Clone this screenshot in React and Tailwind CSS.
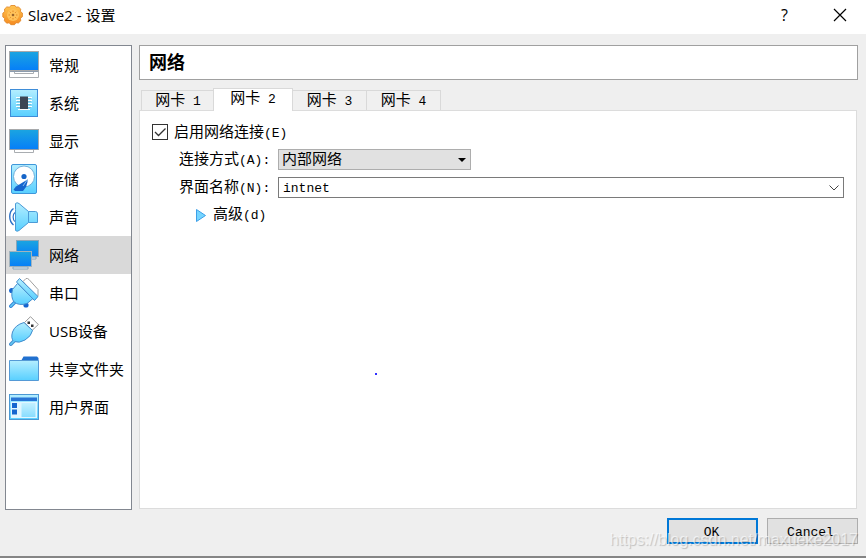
import React, { useState } from "react";

const SONG = "font-['Liberation_Mono','Noto_Sans_CJK_SC',monospace]";
const UI = "font-['Open_Sans','Noto_Sans_CJK_SC',sans-serif]";

function Gradients() {
  return (
    <svg width="0" height="0" className="absolute" aria-hidden="true">
      <defs>
        <linearGradient id="screen" x1="0" y1="0" x2="0" y2="1">
          <stop offset="0" stopColor="#1ba5e0" />
          <stop offset="1" stopColor="#067ef8" />
        </linearGradient>
        <linearGradient id="sky" x1="0" y1="0" x2="0" y2="1">
          <stop offset="0" stopColor="#b4eeff" />
          <stop offset="1" stopColor="#58cfff" />
        </linearGradient>
        <linearGradient id="gear" x1="0" y1="0" x2="0" y2="1">
          <stop offset="0" stopColor="#ffc552" />
          <stop offset="1" stopColor="#f48b22" />
        </linearGradient>
      </defs>
    </svg>
  );
}

function Icon({ children }) {
  return (
    <svg viewBox="0 0 30 30" className="size-[30px] shrink-0" aria-hidden="true">
      {children}
    </svg>
  );
}

const GeneralIcon = () => (
  <Icon>
    <path d="M.5 20.5h29v7H.5z" fill="#fff" stroke="#a9adb1" />
    <rect x="0.5" y="1.5" width="29" height="19" fill="url(#screen)" stroke="#a7a9ab" />
    <path d="M5.5 21v2.5h19V21" fill="#fff" stroke="#a9adb1" />
    <path d="M1 21.5h28" stroke="#8c9cae" />
  </Icon>
);

const SystemIcon = () => (
  <Icon>
    <rect x="1.5" y="1.5" width="27" height="27" fill="url(#sky)" stroke="#3f8dd8" />
    <path d="M7 9.500h16M7 12.500h16M7 15.500h16M7 18.500h16M9 21.500h12" stroke="#fff" />
    <path d="M8 10.500h14M8 13.500h14M8 16.500h14M8 19.500h14" stroke="#6fb4d0" strokeWidth=".8" />
    <rect x="11" y="8.500" width="8" height="12.500" fill="#3c4654" />
  </Icon>
);

const DisplayIcon = () => (
  <Icon>
    <path d="M5.5 23v3.5h19V23" fill="#fff" stroke="#a9adb1" />
    <rect x="0.5" y="3.5" width="29" height="20" fill="url(#screen)" stroke="#a7a9ab" />
    <path d="M1 23.5h28" stroke="#8c9cae" />
  </Icon>
);

const StorageIcon = () => (
  <Icon>
    <rect x="2.5" y=".5" width="25" height="29" rx="1.5" fill="url(#sky)" stroke="#3f97da" />
    <circle cx="15" cy="12.5" r="10.5" fill="#fff" stroke="#5fa0cf" strokeWidth=".8" />
    <circle cx="15" cy="12.5" r="2.6" fill="#1565c8" />
    <path d="M18.5 15.5 7 22.5 4.5 25.5 6 27h8l3-4 1.5-5z" fill="#1565cf" />
    <path d="M18.5 15.5 14 22" stroke="#8bbdf0" />
  </Icon>
);

const SoundIcon = () => (
  <Icon>
    <path d="M4.500 6.500C-.500 10 -.500 19 4.500 23" fill="none" stroke="#2c71c6" strokeWidth="1.400" />
    <path d="M6 10.500C3.500 12 3.500 18 6 19.500" fill="none" stroke="#2c71c6" strokeWidth="1.200" />
    <path d="M6.500 7.500V1.500Q8 0 10 1.500L19.500 9.500H26.500Q28.500 9.500 28.500 12V20.500H19.500L10 28.500Q8 30 6.500 28.500Z" fill="url(#sky)" stroke="#4c9bd6" />
    <path d="M19.500 9.500v11" stroke="#4c9bd6" />
  </Icon>
);

const NetworkIcon = () => (
  <Icon>
    <path d="M22 17h5v2h-5z" fill="#e6eef5" stroke="#8aa5b9" />
    <rect x="7.500" y=".500" width="22" height="16" fill="url(#screen)" stroke="#8aa5b9" />
    <rect x=".500" y="11.500" width="22" height="15" fill="url(#screen)" stroke="#a2b3be" />
    <path d="M4 27h15v2H4z" fill="#e6eef5" stroke="#8aa5b9" />
  </Icon>
);

const SerialIcon = () => (
  <Icon>
    <path d="M14 3.500 17 .500Q18.500 0 20 1.500L29 11.500V17.500L27.500 19.500z" fill="#fff" stroke="#a0a0a0" />
    <path d="M1.800 28.200 6.500 23.500" stroke="#3285d8" strokeWidth="3.500" strokeLinecap="round" />
    <path d="M1.800 28.200 6 24" stroke="#64caf5" strokeWidth="1.500" strokeLinecap="round" />
    <circle cx="2.700" cy="12.500" r="2.600" fill="#1565cf" />
    <circle cx="17" cy="27" r="2.600" fill="#1565cf" />
    <path d="M8.500 5.500 24 20.500 18 25.500Q10 28 5 24 1.500 19 3.500 11.500z" fill="url(#sky)" stroke="#438dce" />
    <path d="M7.500 4 10.500.500 29 18.500 25.500 22.500z" fill="url(#sky)" stroke="#438dce" />
  </Icon>
);

const UsbIcon = () => (
  <Icon>
    <path d="M15.500 6.500 21.500.700 29.300 8.500 23 14.500z" fill="#fff" stroke="#999" />
    <path d="M18.500 5.500h2.500v2.500h-2.500zM22 8.500h2.500v2.500h-2.500z" fill="#333" />
    <path d="M1.800 28.200 6 24" stroke="#438dce" strokeWidth="3.500" strokeLinecap="round" />
    <path d="M15 6.500 23.500 14.500Q22.500 20 16 24 10 27.500 5 25.500 1.500 22.500 3.500 16 6 9 15 6.500Z" fill="url(#sky)" stroke="#438dce" />
    <path d="M1.800 28.200 6 24" stroke="#64caf5" strokeWidth="1.500" strokeLinecap="round" />
  </Icon>
);

const FolderIcon = () => (
  <Icon>
    <path d="M12 7 14.500 2.500H28l1.500 1.500V9H12z" fill="#2170cf" />
    <path d="M.500 6.500h29v20H.500z" fill="url(#sky)" stroke="#559ad6" />
  </Icon>
);

const InterfaceIcon = () => (
  <Icon>
    <rect x=".500" y="2.500" width="29" height="25" fill="url(#sky)" stroke="#4b98d3" />
    <path d="M2 5.500h26v3.500H2z" fill="#2875d5" />
    <path d="M2 10h26v16H2z" fill="#e0f6ff" />
    <path d="M3 11h5v5H3zM3 17.500h5v5H3z" fill="#1566cf" />
    <path d="M12.500 11h14v14h-14z" fill="url(#sky)" opacity=".65" />
  </Icon>
);

const pages = [
  ["常规", GeneralIcon],
  ["系统", SystemIcon],
  ["显示", DisplayIcon],
  ["存储", StorageIcon],
  ["声音", SoundIcon],
  ["网络", NetworkIcon],
  ["串口", SerialIcon],
  ["USB设备", UsbIcon],
  ["共享文件夹", FolderIcon],
  ["用户界面", InterfaceIcon],
];

function TitleBar() {
  return (
    <header className="flex h-[34px] shrink-0 items-center bg-white pl-[2px] pb-[4px]">
      <svg viewBox="0 0 22 22" className="size-[22px]" aria-hidden="true">
        <g fill="url(#gear)" stroke="#e08220" strokeWidth=".8">
          <path d="M9 1.500h4l1 1.700 2.500-.3 2.200 2.300-.3 2.300 2 1.500v3.700l-2 1.500.4 2.500-2.400 2.300-2.400-.3-1.500 2h-3.700l-1.600-1.900-2.500.4-2.300-2.400.3-2.500-1.900-1.400V9.200l1.900-1.600-.2-2.500 2.300-2.200 2.500.3z" />
        </g>
        <circle cx="11" cy="11" r="6" fill="#ffc25a" />
        <path d="M11 6.500v1.500M11 14v1.500M6.500 11H8M14 11h1.500M7.800 7.800l1 1M13.200 13.200l1 1M14.200 7.800l-1 1M8.800 13.200l-1 1" stroke="#e58a25" />
        <circle cx="11" cy="11" r="1.300" fill="#9b652c" />
      </svg>
      <h1 className="ml-1 flex-1 whitespace-nowrap text-[15px] leading-5">Slave2 - 设置</h1>
      <button type="button" aria-label="帮助" className="flex h-[30px] w-[57px] items-center justify-center text-[16px]">?</button>
      <button type="button" aria-label="关闭" className="flex h-[30px] w-[53px] items-center justify-center">
        <svg viewBox="0 0 14 14" className="size-[14px]" aria-hidden="true">
          <path d="m1 1 12 12M13 1 1 13" stroke="#000" strokeWidth="1.200" />
        </svg>
      </button>
    </header>
  );
}

function Sidebar() {
  const [current, setCurrent] = useState("网络");
  return (
    <nav className="w-[127px] shrink-0 border border-[#828790] bg-white">
      {pages.map(([name, PageIcon]) => (
        <button
          key={name}
          type="button"
          onClick={() => setCurrent(name)}
          className={`flex h-[38px] w-full items-center gap-[10px] whitespace-nowrap pl-[3px] text-left text-[15px] leading-5 ${
            current === name ? "bg-[#d9d9d9]" : ""
          }`}
        >
          <PageIcon />
          {name}
        </button>
      ))}
    </nav>
  );
}

function Latin({ children }) {
  return <span className="whitespace-pre text-[13px]">{children}</span>;
}

function Tabs() {
  const [active, setActive] = useState(2);
  return (
    <div role="tablist" className="-mb-px flex h-[23px] items-end pl-[2px]">
      {[1, 2, 3, 4].map((n) => (
        <button
          key={n}
          type="button"
          role="tab"
          aria-selected={active === n}
          onClick={() => setActive(n)}
          className={`whitespace-nowrap border-[#d9d9d9] text-[15px] leading-4 ${
            active === n
              ? "z-10 -ml-[2px] h-[23px] w-[80px] border-x border-t bg-white"
              : "h-[21px] w-[74px] border-y border-r bg-[#f0f0f0] pt-[2px] first:border-l"
          }`}
        >
          网卡<Latin>{" " + n}</Latin>
        </button>
      ))}
    </div>
  );
}

function AdapterForm() {
  const [enabled, setEnabled] = useState(true);
  return (
    <section className="flex-1 border border-[#dcdcdc] bg-white pt-3 pr-3 pl-3 text-[15px] leading-5">
      <label className="flex h-[18px] items-center gap-[6px]">
        <span className="grid size-4 place-items-center">
          <input
            type="checkbox"
            checked={enabled}
            onChange={() => setEnabled(!enabled)}
            className="peer col-start-1 row-start-1 size-4 appearance-none border border-[#333] bg-white"
          />
          <svg viewBox="0 0 16 16" className="pointer-events-none invisible col-start-1 row-start-1 size-4 peer-checked:visible" aria-hidden="true">
            <path d="m3 8 3.500 3.500L13.500 4.500" fill="none" stroke="#333" strokeWidth="1.300" />
          </svg>
        </span>
        <span className="pt-1">启用网络连接<Latin>(E)</Latin></span>
      </label>
      <div className="mt-2 grid grid-cols-[99px_1fr] items-start gap-y-1 pl-[27px] leading-6">
        <label htmlFor="attach">连接方式<Latin>(A):</Latin></label>
        <span className="grid w-[193px] items-center">
          <select id="attach" className="col-start-1 row-start-1 h-[21px] w-full appearance-none border border-[#adadad] bg-[#e1e1e1] pt-[2px] pl-[3px] leading-[17px]">
            <option>内部网络</option>
          </select>
          <svg viewBox="0 0 8 4" className="pointer-events-none col-start-1 row-start-1 mr-[5px] h-1 w-2 justify-self-end" aria-hidden="true">
            <path d="M0 0h8L4 4z" />
          </svg>
        </span>
        <label htmlFor="name">界面名称<Latin>(N):</Latin></label>
        <span className="flex h-[21px] items-center border border-[#7a7a7a]">
          <input id="name" defaultValue="intnet" className="h-[19px] min-w-0 flex-1 bg-transparent pt-[2px] pl-1 text-[13px] outline-none" />
          <button type="button" aria-label="展开列表" className="flex h-[19px] w-[18px] items-center justify-center">
            <svg viewBox="0 0 10 6" className="h-[6px] w-[10px]" aria-hidden="true">
              <path d="m.500.500 4.500 4.500L9.500.500" fill="none" stroke="#444" />
            </svg>
          </button>
        </span>
      </div>
      <button type="button" className="mt-[3px] ml-[44px] flex items-center gap-[7px]">
        <svg viewBox="0 0 10 13" className="h-[13px] w-[10px]" aria-hidden="true">
          <path d="M.500.500 9.500 6.500.500 12.500z" fill="#75d5ff" stroke="#3d9fe8" />
        </svg>
        <span className="pt-[2px] leading-5">高级<Latin>(d)</Latin></span>
      </button>
    </section>
  );
}

export default function App() {
  return (
    <div className={`relative flex min-h-screen flex-col border-b-2 border-[#858585] bg-[#efefef] text-black ${UI}`}>
      <Gradients />
      <TitleBar />
      <div className="flex flex-1 gap-[7px] pt-[11px] pr-2 pl-[5px]">
        <Sidebar />
        <main className={`flex min-w-0 flex-1 flex-col ${SONG}`}>
          <h2 className="mb-2 flex h-[35px] items-center border border-[#a0a0a0] bg-white pt-[3px] pl-[9px] text-[18px] font-bold">网络</h2>
          <Tabs />
          <div className="mr-px mb-px flex flex-1 flex-col">
            <AdapterForm />
          </div>
        </main>
      </div>
      <footer className={`flex justify-end gap-[9px] pt-2 pr-2 pb-3 text-[13px] ${SONG}`}>
        <button type="button" className="h-[26px] w-[91px] border-2 border-[#0078d7] bg-[#e1e1e1] pt-[3px] pr-[2px]">OK</button>
        <button type="button" className="h-[26px] w-[91px] border border-[#adadad] bg-[#e1e1e1] pt-[3px] pr-1">Cancel</button>
      </footer>
      <span className="absolute top-[373px] left-[375px] size-[2px] bg-[#3030ff]" aria-hidden="true" />
      <p className="pointer-events-none absolute right-[8px] bottom-[4px] z-20 font-['Liberation_Sans',sans-serif] text-[16px] leading-6 text-white/60 [text-shadow:1px_1px_1px_rgba(0,0,0,0.2)]">
        https://blog.csdn.net/maxueke2017
      </p>
    </div>
  );
}
